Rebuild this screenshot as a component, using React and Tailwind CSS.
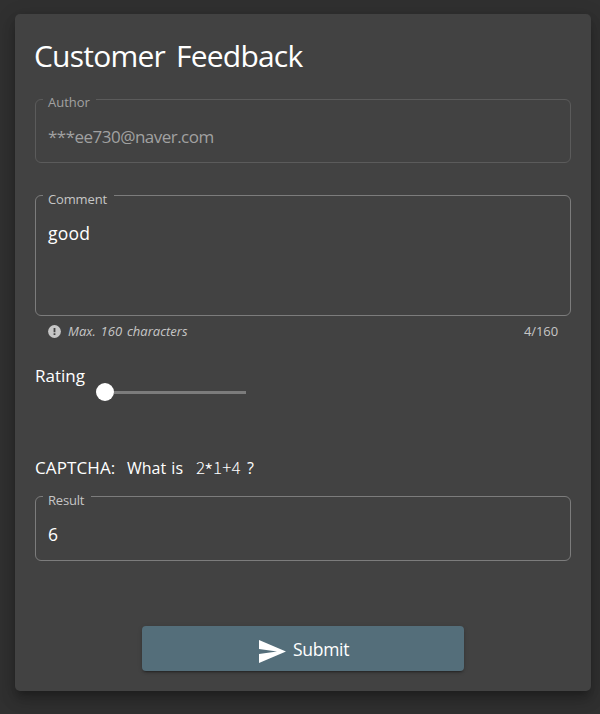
function OutlinedField({ label, legendClass, borderClass, className, children }) {
  return (
    <fieldset className={`min-w-0 rounded-[6px] border px-3 ${borderClass} ${className}`}>
      <legend className={`-ml-[5px] h-5 whitespace-nowrap pl-[5px] text-[13px] leading-[13px] ${legendClass}`}>
        {label}
      </legend>
      {children}
    </fieldset>
  );
}

export default function App() {
  return (
    <main className="h-[714px] w-[600px] overflow-hidden bg-[#303030] pl-[15px] pt-[14px] font-['Open_Sans','Noto_Sans',sans-serif] text-white">
      <section className="flex h-[677px] w-[576px] flex-col rounded-[5px] bg-[#424242] px-5 shadow-[0_6px_6px_-3px_rgba(0,0,0,0.2),0_10px_14px_1px_rgba(0,0,0,0.14),0_4px_18px_3px_rgba(0,0,0,0.12)]">
        <h1 className="-ml-px mt-[22px] h-10 whitespace-nowrap text-[30px] leading-10 tracking-[-0.78px] [word-spacing:4px]">Customer Feedback</h1>

        <OutlinedField label="Author" borderClass="border-[#5b5b5b]" legendClass="w-[53px] pt-[7px] text-[#a1a1a1]" className="mt-[13px] h-[74px] shrink-0">
          <p className="mt-[16px] text-[17px] leading-6 tracking-[-0.52px] text-[#a1a1a1]">***ee730@naver.com</p>
        </OutlinedField>

        <OutlinedField label="Comment" borderClass="border-[#7c7c7c]" legendClass="w-[71px] pt-[8px] tracking-[-0.15px] text-[#c6c6c6]" className="mt-[22px] h-[131px] shrink-0">
          <p className="mt-[16px] text-[17.5px] leading-6 tracking-[0.2px]">good</p>
        </OutlinedField>

        <div className="mt-[6px] flex h-[18px] items-center px-[13px] text-[13px] leading-[18px] text-[#c6c6c6]">
          <svg className="h-[13px] w-[13px]" viewBox="0 0 13 13">
            <circle cx="6.5" cy="6.5" r="6.4" fill="#c6c6c6" />
            <path d="M5.6 3h1.8v4.2H5.6zM5.6 8.3h1.8V10H5.6z" fill="#424242" />
          </svg>
          <em className="ml-[7px] [word-spacing:1.5px]">Max. 160 characters</em>
          <span className="ml-auto tracking-[-0.1px]">4/160</span>
        </div>

        <div className="mt-[24px] flex h-[40px] items-start">
          <span className="h-6 w-[61px] text-[17px] leading-6">Rating</span>
          <div className="mt-[18px] flex h-[20px] items-center">
            <span className="h-[18px] w-[18px] rounded-full bg-white" />
            <span className="h-[3px] w-[132px] bg-[#7c7c7c]" />
          </div>
        </div>

        <div className="mt-[51px] flex h-6 items-baseline whitespace-nowrap leading-6">
          <span className="w-[92px] text-[17px] tracking-[0.1px]">CAPTCHA:</span>
          <span className="w-[69px] text-base [word-spacing:1px]">What is</span>
          <span className="w-[51px] font-['Noto_Sans_CJK_KR',sans-serif] text-[17px] font-light leading-6 tracking-[0.2px]">
            2<span className="inline-block translate-y-[4px] scale-125">*</span>1+4
          </span>
          <span className="text-base">?</span>
        </div>

        <OutlinedField label="Result" borderClass="border-[#7c7c7c]" legendClass="w-[48px] pt-[8px] tracking-[-0.2px] text-[#c6c6c6]" className="mt-[7px] h-[75px] shrink-0">
          <p className="mt-[16px] text-[17.5px] leading-6">6</p>
        </OutlinedField>

        <button className="ml-[107px] mt-[65px] flex h-[45px] w-[322px] shrink-0 items-center rounded-[4px] bg-[#546e7a] pl-[117px] text-[17.5px] shadow-[0_3px_1px_-2px_rgba(0,0,0,0.2),0_2px_2px_0_rgba(0,0,0,0.14),0_1px_5px_0_rgba(0,0,0,0.12)]">
          <svg className="mt-[6px] h-[23px] w-[27px]" viewBox="0 0 27 23" fill="white">
            <path d="M0 0 27 11.5 0 23V14L18 11.5 0 9Z" />
          </svg>
          <span className="ml-[7px] leading-6 tracking-[-0.3px]">Submit</span>
        </button>
      </section>
    </main>
  );
}
